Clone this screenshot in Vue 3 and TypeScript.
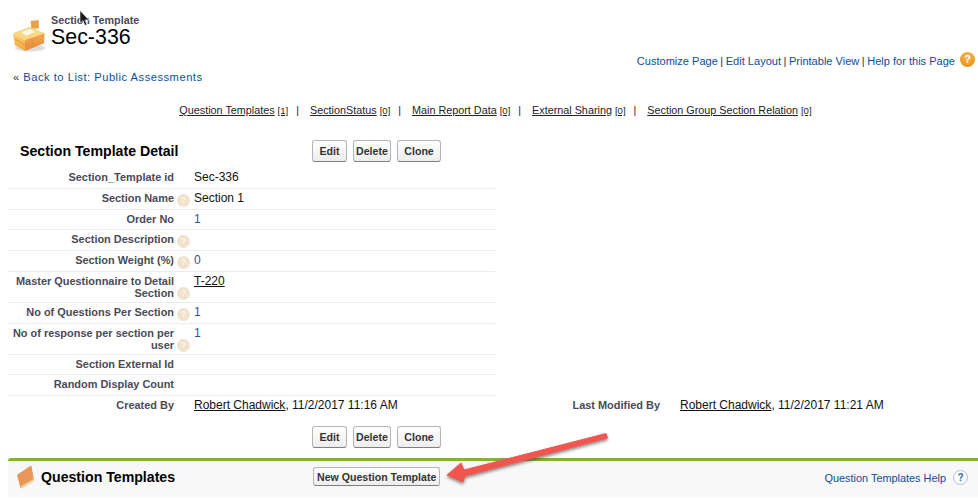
<script setup lang="ts">
interface Rel { name: string; count: string }
interface Row { label: string; help?: boolean; value?: string; link?: boolean; num?: boolean }
const topLinks: string[] = ['Customize Page', 'Edit Layout', 'Printable View', 'Help for this Page']
const rels: Rel[] = [
  { name: 'Question Templates', count: '[1]' },
  { name: 'SectionStatus', count: '[0]' },
  { name: 'Main Report Data', count: '[0]' },
  { name: 'External Sharing', count: '[0]' },
  { name: 'Section Group Section Relation', count: '[0]' },
]
const rows: Row[] = [
  { label: 'Section_Template id', value: 'Sec-336' },
  { label: 'Section Name', help: true, value: 'Section 1' },
  { label: 'Order No', value: '1', num: true },
  { label: 'Section Description', help: true },
  { label: 'Section Weight (%)', help: true, value: '0', num: true },
  { label: 'Master Questionnaire to Detail Section', help: true, value: 'T-220', link: true },
  { label: 'No of Questions Per Section', help: true, value: '1', num: true },
  { label: 'No of response per section per user', help: true, value: '1', num: true },
  { label: 'Section External Id' },
  { label: 'Random Display Count' },
]
const buttons: string[] = ['Edit', 'Delete', 'Clone']
</script>

<template>
  <div class="page">
    <header class="head">
      <svg class="desk" width="34" height="34" viewBox="0 0 34 34">
        <defs>
          <linearGradient id="dk" x1="0" y1="0" x2="0" y2="1"><stop offset="0" stop-color="#fcd36c" /><stop offset="1" stop-color="#f2a33e" /></linearGradient>
          <linearGradient id="dr" x1="0" y1="0" x2="0" y2="1"><stop offset="0" stop-color="#f3a84c" /><stop offset="1" stop-color="#e58a3a" /></linearGradient>
        </defs>
        <ellipse cx="18" cy="30" rx="15" ry="3.5" fill="#aaa" opacity=".4" />
        <path d="M18.7 3 L26.7 2 L27 10.3 L19.3 11 Z" fill="#e9a04e" />
        <path d="M1 15.3 L17.7 8.7 L32.7 15.3 L12.7 22 Z" fill="#fad785" />
        <path d="M9.3 14.3 L17.7 11 L23.3 13.7 L14.3 17.7 Z" fill="#fcf8ea" />
        <path d="M1 15.3 L12.7 22 L13.3 33 L2.7 27 Z" fill="url(#dk)" />
        <path d="M12.7 22 L32.7 15.3 L32 25.3 L13.3 33 Z" fill="url(#dr)" />
        <path d="M20 21 L20 29.5 M3 21 L13 27" stroke="#d98a36" stroke-width=".7" fill="none" />
      </svg>
      <div class="titles">
        <div class="kicker">Section Template</div>
        <h1 class="title">Sec-336</h1>
      </div>
    </header>

    <div class="toplinks">
      <template v-for="(l, i) in topLinks" :key="l">
        <span v-if="i" class="pipe">|</span><a class="blue">{{ l }}</a>
      </template>
      <span class="orange-help">?</span>
    </div>

    <div class="back"><span class="raquo">«</span> <a class="blue">Back to List: Public Assessments</a></div>

    <nav class="rels">
      <template v-for="(r, i) in rels" :key="r.name">
        <span v-if="i" class="relpipe">|</span>
        <span class="rel"><u>{{ r.name }}</u> <u class="count">{{ r.count }}</u></span>
      </template>
    </nav>

    <section class="detail">
      <div class="detail-head">
        <h2 class="detail-title">Section Template Detail</h2>
        <div class="btns">
          <button v-for="b in buttons" :key="b" class="btn" :class="'btn-' + b">{{ b }}</button>
        </div>
      </div>
      <div v-for="r in rows" :key="r.label" class="row">
        <div class="label">{{ r.label }}</div>
        <div class="helpcell"><span v-if="r.help" class="faint-help">?</span></div>
        <div class="value" :class="{ num: r.num }"><u v-if="r.link">{{ r.value }}</u><template v-else>{{ r.value }}</template></div>
      </div>
      <div class="row wide">
        <div class="label">Created By</div>
        <div class="helpcell"></div>
        <div class="value"><u>Robert Chadwick</u>, 11/2/2017 11:16 AM</div>
        <div class="label">Last Modified By</div>
        <div class="helpcell"></div>
        <div class="value"><u>Robert Chadwick</u>, 11/2/2017 11:21 AM</div>
      </div>
      <div class="btns bottom">
        <button v-for="b in buttons" :key="'b' + b" class="btn" :class="'btn-' + b">{{ b }}</button>
      </div>
    </section>

    <section class="related">
      <svg class="book" width="20" height="25" viewBox="0 0 20 25">
        <path d="M15 1 L1.5 10 L5 23 L17.5 15.5 Z" fill="#e8965a" stroke="#e8965a" stroke-linejoin="round" />
        <path d="M5 21.5 L17.5 14 L18 16 L5.5 24 Z" fill="#f3d9a0" />
      </svg>
      <h3 class="rel-title">Question Templates</h3>
      <button class="btn small">New Question Template</button>
      <a class="blue rel-help">Question Templates Help</a>
      <span class="blue-help">?</span>
    </section>

    <svg class="arrow" width="180" height="60" viewBox="0 0 180 60">
      <defs>
        <filter id="sh" x="-10%" y="-30%" width="120%" height="170%"><feDropShadow dx="0" dy="2" stdDeviation="1.5" flood-color="#333" flood-opacity=".55" /></filter>
      </defs>
      <path d="M170 3.5 L171.5 8 L29 46 L27 52 L11 45 L25 33 L28 40 Z" fill="#f0574f" stroke="#f0574f" stroke-linejoin="round" filter="url(#sh)" />
    </svg>

    <svg class="cursor" width="12" height="17" viewBox="0 0 12 17">
      <path d="M1 0.5 L1 13 L4 10.5 L6 15.5 L8 14.5 L6 10 L10 10 Z" fill="#1a1a1a" stroke="#fff" stroke-width=".6" />
    </svg>
  </div>
</template>

<style>
html, body { margin: 0; background: #fff; }
</style>

<style scoped>
.page {
  position: relative;
  width: 978px;
  height: 498px;
  overflow: hidden;
  background: #fff;
  font-family: "Liberation Sans", Arial, sans-serif;
  font-size: 12px;
  color: #222;
}
.head {
  display: flex;
  align-items: flex-start;
  padding: 15px 0 0 12px;
  height: 37px;
}
.desk { margin-top: 3px; }
.titles { margin-left: 5px; }
.kicker {
  font-size: 10.75px;
  font-weight: 700;
  line-height: 11px;
  color: #4a4a56;
}
.title {
  margin: -1px 0 0;
  font-size: 21.4px;
  font-weight: 400;
  line-height: 24px;
  color: #000;
}
.toplinks {
  display: flex;
  justify-content: flex-end;
  align-items: center;
  height: 16px;
  margin-top: 1px;
  padding-right: 3px;
  font-size: 11.05px;
  color: #333;
}
.blue { color: #0f4d92; }
.pipe { margin: 0 2.5px; }
.orange-help {
  width: 15px;
  height: 15px;
  margin: -3px 0 0 5px;
  border-radius: 50%;
  background: radial-gradient(circle at 50% 30%, #f7b84a, #e08a12);
  color: #fff;
  font-size: 11px;
  font-weight: 700;
  line-height: 15px;
  text-align: center;
}
.back {
  margin: 0 0 0 13px;
  height: 16px;
  line-height: 16px;
  font-size: 11.2px;
  letter-spacing: .49px;
}
.raquo { color: #333; }
.rels {
  display: flex;
  justify-content: center;
  align-items: center;
  height: 14px;
  margin-top: 18px;
  padding-left: 13px;
  font-size: 10.8px;
  color: #222;
}
.count { font-size: 9.6px; }
.relpipe { margin: 0 11px 0 8px; font-size: 10.5px; }
.detail { margin-top: 23px; }
.detail-head {
  display: flex;
  align-items: center;
  height: 22px;
  padding: 0 0 0 20px;
  margin-bottom: 6px;
}
.detail-title {
  width: 292px;
  margin: 0;
  font-size: 14.15px;
  font-weight: 700;
  color: #000;
}
.btns { display: flex; gap: 5.5px; }
.btn {
  height: 22px;
  padding: 0 7px;
  border: 1px solid #b5b5b5;
  border-bottom-color: #7f7f7f;
  border-radius: 3px;
  background: linear-gradient(#fff, #ededed);
  font-family: inherit;
  font-size: 10.6px;
  font-weight: 700;
  color: #333;
}
.btn-Edit { padding: 0 6.5px; }
.btn-Delete { padding: 0 2.5px; }
.btn-Clone { padding: 0 6.5px; }
.row {
  display: grid;
  grid-template-columns: 166px 20px 300px;
  width: 487px;
  margin-left: 8px;
  min-height: 20.75px;
  box-sizing: border-box;
  padding: 3px 0;
  border-bottom: 1px solid #ececec;
}
.row.wide {
  grid-template-columns: 166px 20px 300px 166px 20px 300px;
  width: 970px;
  border-bottom: 0;
}
.label {
  font-size: 10.95px;
  font-weight: 700;
  line-height: 12px;
  text-align: right;
  color: #4a4a56;
}
.helpcell { display: flex; align-items: flex-end; padding-left: 3px; }
.faint-help {
  width: 13px;
  height: 13px;
  margin-bottom: -1px;
  border-radius: 50%;
  background: #f0e2cc;
  color: #fbf5ea;
  font-size: 9px;
  font-weight: 700;
  line-height: 13px;
  text-align: center;
}
.value { line-height: 13px; color: #111; }
.value.num { color: #1a5a9a; }
.bottom { margin: 9px 0 0 312px; }
.related {
  display: flex;
  align-items: center;
  box-sizing: border-box;
  height: 39px;
  margin: 10px 0 0 8px;
  padding: 0 0 3px 8px;
  border-top: 3px solid #84b13c;
  border-top-left-radius: 3px;
  background: #f8f8f8;
}
.book { flex: none; margin-top: 1px; }
.rel-title {
  width: 272px;
  margin: 0 0 0 5px;
  font-size: 14.15px;
  font-weight: 700;
  color: #000;
}
.btn.small { height: 19px; padding: 0 3px; margin-top: -1px; }
.rel-help { margin-left: auto; font-size: 10.9px; margin-top: 2px; }
.blue-help {
  width: 13px;
  height: 13px;
  margin: 0 10px 0 7px;
  border: 1px solid #a9c3df;
  border-radius: 50%;
  background: #fff;
  color: #2b6cb0;
  font-size: 10px;
  font-weight: 700;
  line-height: 13px;
  text-align: center;
}
.arrow { position: absolute; left: 436px; top: 430px; }
.cursor { position: absolute; left: 79px; top: 10px; }
</style>
